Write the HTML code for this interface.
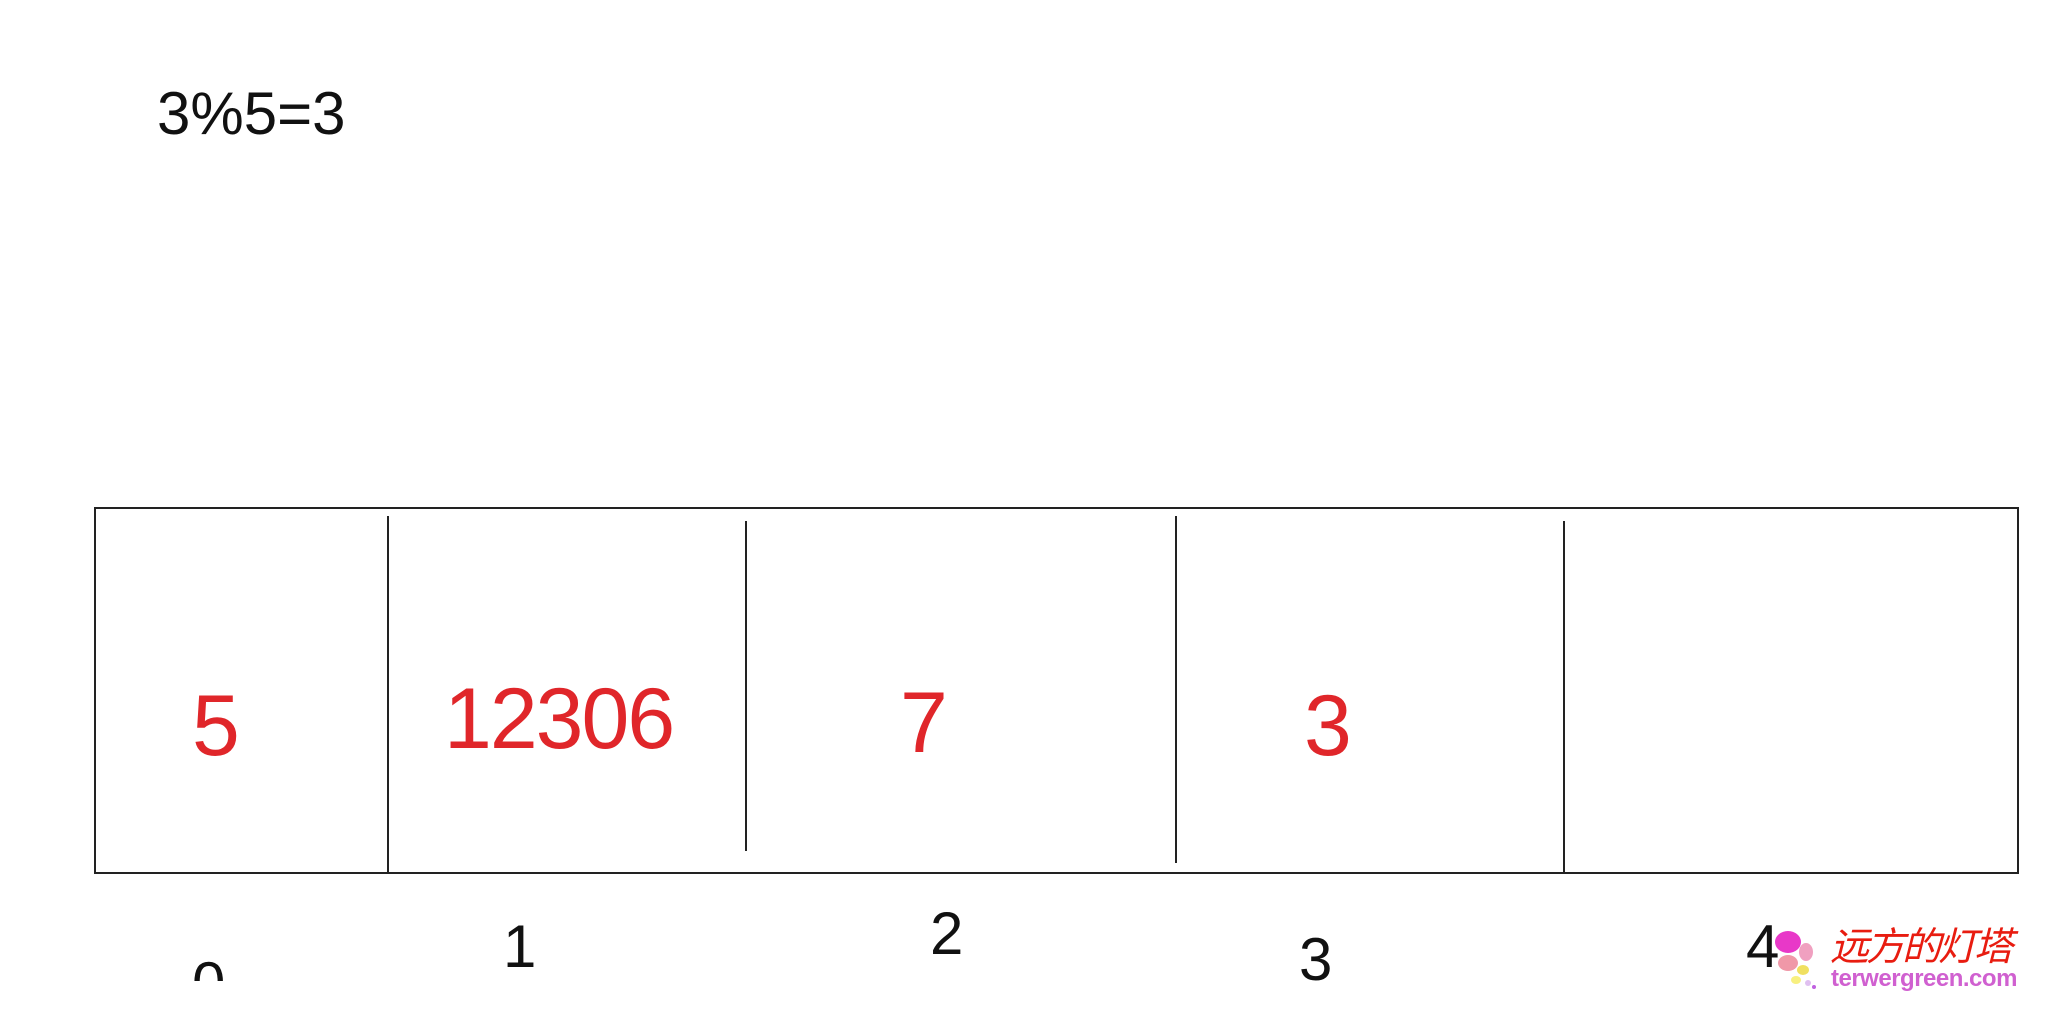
<!DOCTYPE html>
<html><head><meta charset="utf-8"><style>
html,body{margin:0;padding:0;background:#fff}
body{width:2050px;height:1012px;position:relative;overflow:hidden;font-family:"Liberation Sans",sans-serif}
.t{position:absolute;line-height:1;white-space:nowrap}
.k{font-size:60px;color:#111}
.r{font-size:86px;color:#e0262a}
.v{position:absolute;width:2px;background:#222}
</style></head><body>
<div class="t k" style="left:157px;top:84px">3%5=3</div>
<div style="position:absolute;left:94px;top:507px;width:1921px;height:363px;border:2px solid #222"></div>
<div class="v" style="left:387px;top:516px;height:358px"></div>
<div class="v" style="left:745px;top:521px;height:330px"></div>
<div class="v" style="left:1175px;top:516px;height:347px"></div>
<div class="v" style="left:1563px;top:521px;height:353px"></div>
<div class="t r" style="left:192px;top:683px">5</div>
<div class="t r" style="left:444px;top:676px;letter-spacing:-2px">12306</div>
<div class="t r" style="left:900px;top:680px">7</div>
<div class="t r" style="left:1304px;top:683px">3</div>
<div class="t k" style="left:192px;top:954px">0</div>
<div class="t k" style="left:503px;top:917px">1</div>
<div class="t k" style="left:930px;top:904px">2</div>
<div class="t k" style="left:1299px;top:930px">3</div>
<div class="t k" style="left:1746px;top:917px">4</div>
<div style="position:absolute;left:0;top:981px;width:1740px;height:40px;background:#fff"></div>
<svg style="position:absolute;left:1770px;top:925px" width="60" height="70">
<ellipse cx="18" cy="17" rx="13" ry="11" fill="#e838c8"/>
<ellipse cx="36" cy="27" rx="7" ry="9" fill="#f0a0c0"/>
<ellipse cx="18" cy="38" rx="10" ry="8" fill="#f098a8"/>
<ellipse cx="33" cy="45" rx="6" ry="5" fill="#f0e060"/>
<ellipse cx="26" cy="55" rx="5" ry="4" fill="#f8f080"/>
<circle cx="38" cy="58" r="3" fill="#e0c0f0"/>
<circle cx="44" cy="62" r="2" fill="#c060e0"/>
</svg>
<div class="t" style="left:1830px;top:928px;font-size:39px;color:#e81c10;font-family:'Liberation Sans','Noto Sans CJK SC',sans-serif;font-style:italic;letter-spacing:-3px">远方的灯塔</div>
<div class="t" style="left:1831px;top:967px;font-size:24px;color:#d060d0;font-weight:bold;letter-spacing:-0.5px">terwergreen.com</div>
</body></html>
